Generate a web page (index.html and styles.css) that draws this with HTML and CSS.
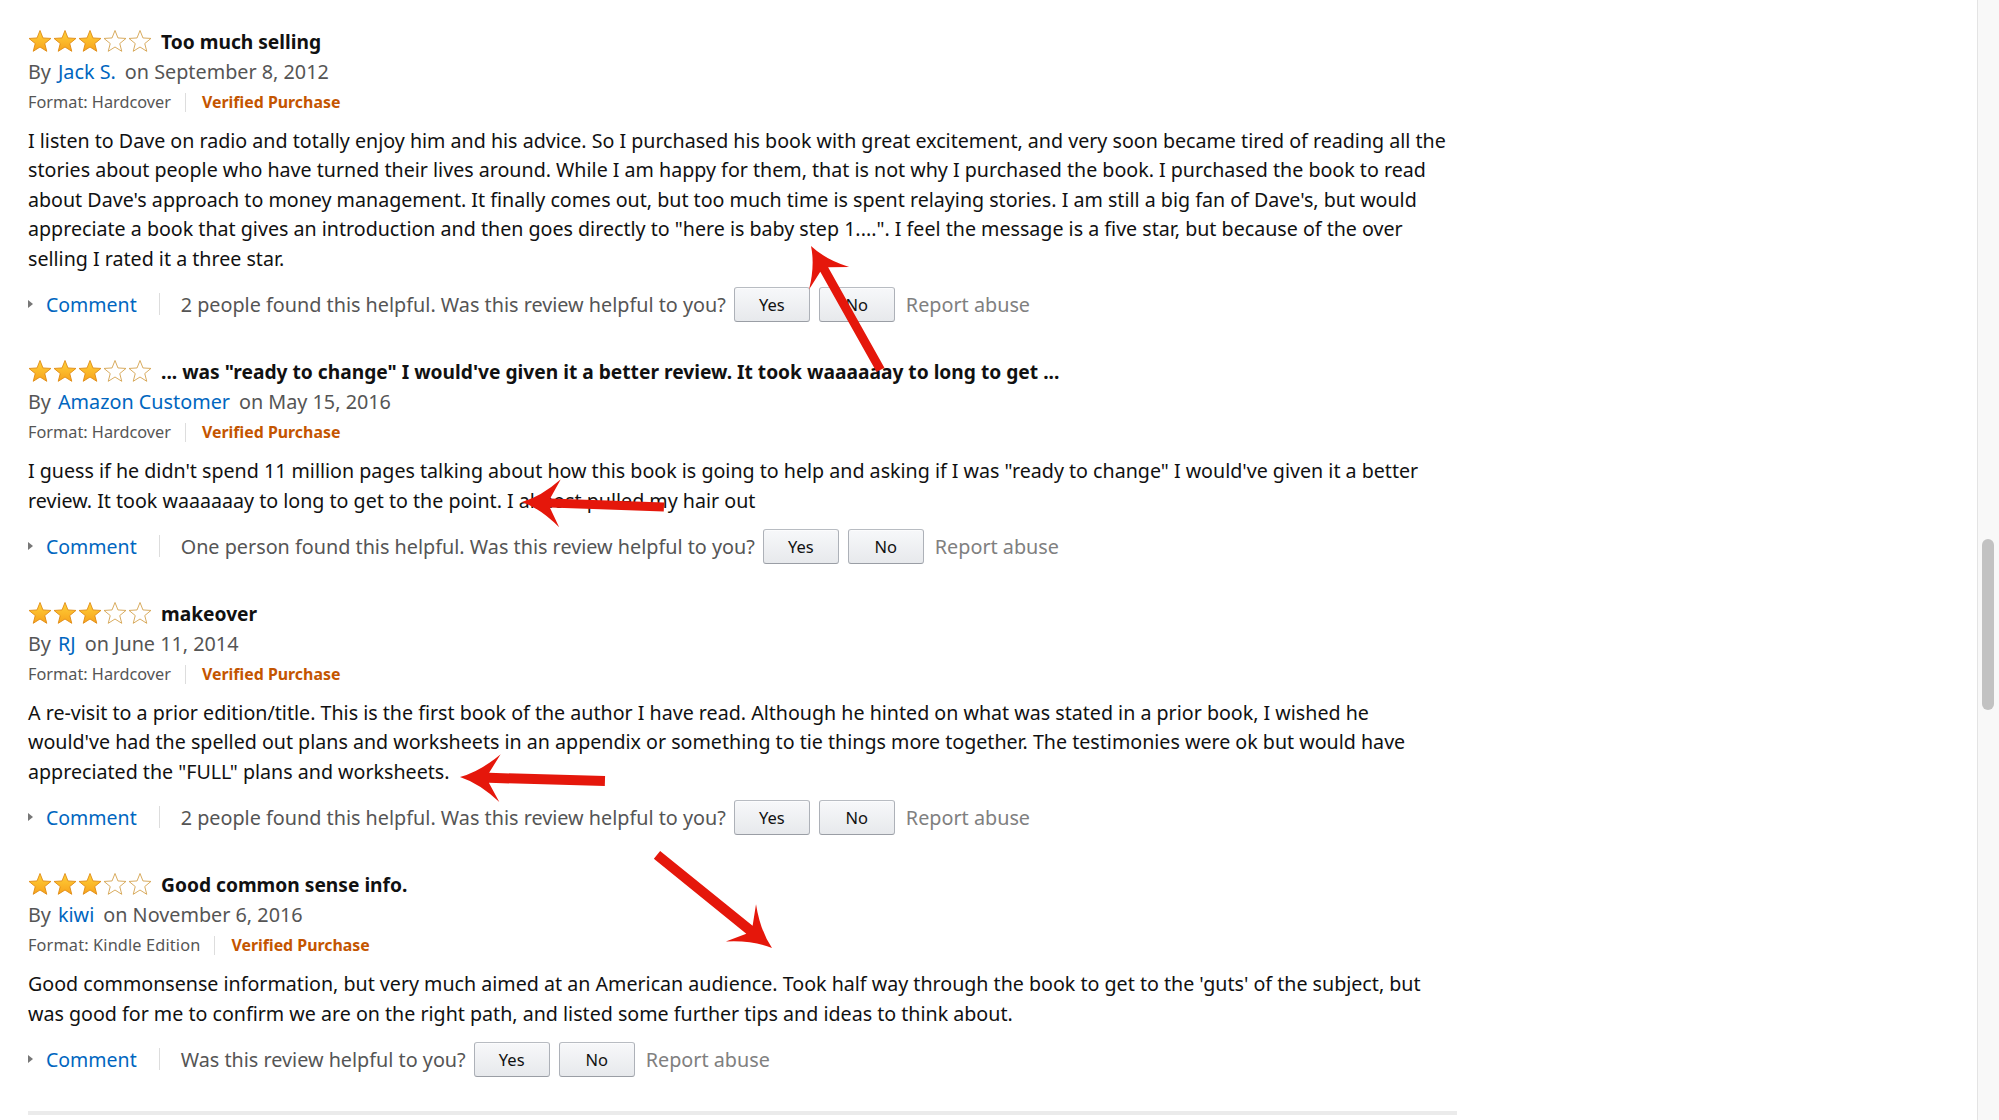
FILE: index.html
```html
<!DOCTYPE html>
<html lang="en">
<head>
<meta charset="utf-8">
<title>Customer reviews</title>
<link rel="stylesheet" href="styles.css">
</head>
<body>
<svg class="defs" width="0" height="0" aria-hidden="true">
  <defs>
    <linearGradient id="gold" x1="0" y1="0" x2="0" y2="1">
      <stop offset="0" stop-color="#ffd23a"/>
      <stop offset="1" stop-color="#f7a21b"/>
    </linearGradient>
    <path id="star" d="M0,-11.5 L2.94,-4.05 L10.94,-3.55 L4.76,1.55 L6.76,9.3 L0,5 L-6.76,9.3 L-4.76,1.55 L-10.94,-3.55 L-2.94,-4.05 Z"/>
  </defs>
</svg>

<div class="page">
  <main class="reviews">

    <section class="review">
      <div class="title-row">
        <svg class="stars" width="126" height="23" viewBox="0 0 126 23">
          <use href="#star" x="12" y="12" class="full"/>
          <use href="#star" x="37" y="12" class="full"/>
          <use href="#star" x="62" y="12" class="full"/>
          <use href="#star" x="87" y="12" class="empty"/>
          <use href="#star" x="112" y="12" class="empty"/>
        </svg>
        <span class="title">Too much selling</span>
      </div>
      <div class="byline"><span class="by">By</span><a class="author">Jack S.</a><span class="date">on September 8, 2012</span></div>
      <div class="meta"><span class="format">Format: Hardcover</span><span class="vsep"></span><span class="verified">Verified Purchase</span></div>
      <p class="text">I listen to Dave on radio and totally enjoy him and his advice. So I purchased his book with great excitement, and very soon became tired of reading all the<br>stories about people who have turned their lives around. While I am happy for them, that is not why I purchased the book. I purchased the book to read<br>about Dave's approach to money management. It finally comes out, but too much time is spent relaying stories. I am still a big fan of Dave's, but would<br>appreciate a book that gives an introduction and then goes directly to "here is baby step 1....". I feel the message is a five star, but because of the over<br>selling I rated it a three star.</p>
      <div class="actions">
        <span class="caret"></span><a class="comment">Comment</a><span class="asep"></span>
        <span class="helpful">2 people found this helpful. Was this review helpful to you?</span>
        <button class="btn">Yes</button><button class="btn">No</button>
        <span class="report">Report abuse</span>
      </div>
    </section>

    <section class="review">
      <div class="title-row">
        <svg class="stars" width="126" height="23" viewBox="0 0 126 23">
          <use href="#star" x="12" y="12" class="full"/>
          <use href="#star" x="37" y="12" class="full"/>
          <use href="#star" x="62" y="12" class="full"/>
          <use href="#star" x="87" y="12" class="empty"/>
          <use href="#star" x="112" y="12" class="empty"/>
        </svg>
        <span class="title">... was "ready to change" I would've given it a better review. It took waaaaaay to long to get ...</span>
      </div>
      <div class="byline"><span class="by">By</span><a class="author">Amazon Customer</a><span class="date">on May 15, 2016</span></div>
      <div class="meta"><span class="format">Format: Hardcover</span><span class="vsep"></span><span class="verified">Verified Purchase</span></div>
      <p class="text">I guess if he didn't spend 11 million pages talking about how this book is going to help and asking if I was "ready to change" I would've given it a better<br>review. It took waaaaaay to long to get to the point. I almost pulled my hair out</p>
      <div class="actions">
        <span class="caret"></span><a class="comment">Comment</a><span class="asep"></span>
        <span class="helpful">One person found this helpful. Was this review helpful to you?</span>
        <button class="btn">Yes</button><button class="btn">No</button>
        <span class="report">Report abuse</span>
      </div>
    </section>

    <section class="review">
      <div class="title-row">
        <svg class="stars" width="126" height="23" viewBox="0 0 126 23">
          <use href="#star" x="12" y="12" class="full"/>
          <use href="#star" x="37" y="12" class="full"/>
          <use href="#star" x="62" y="12" class="full"/>
          <use href="#star" x="87" y="12" class="empty"/>
          <use href="#star" x="112" y="12" class="empty"/>
        </svg>
        <span class="title">makeover</span>
      </div>
      <div class="byline"><span class="by">By</span><a class="author">RJ</a><span class="date">on June 11, 2014</span></div>
      <div class="meta"><span class="format">Format: Hardcover</span><span class="vsep"></span><span class="verified">Verified Purchase</span></div>
      <p class="text">A re-visit to a prior edition/title. This is the first book of the author I have read. Although he hinted on what was stated in a prior book, I wished he<br>would've had the spelled out plans and worksheets in an appendix or something to tie things more together. The testimonies were ok but would have<br>appreciated the "FULL" plans and worksheets.</p>
      <div class="actions">
        <span class="caret"></span><a class="comment">Comment</a><span class="asep"></span>
        <span class="helpful">2 people found this helpful. Was this review helpful to you?</span>
        <button class="btn">Yes</button><button class="btn">No</button>
        <span class="report">Report abuse</span>
      </div>
    </section>

    <section class="review">
      <div class="title-row">
        <svg class="stars" width="126" height="23" viewBox="0 0 126 23">
          <use href="#star" x="12" y="12" class="full"/>
          <use href="#star" x="37" y="12" class="full"/>
          <use href="#star" x="62" y="12" class="full"/>
          <use href="#star" x="87" y="12" class="empty"/>
          <use href="#star" x="112" y="12" class="empty"/>
        </svg>
        <span class="title">Good common sense info.</span>
      </div>
      <div class="byline"><span class="by">By</span><a class="author">kiwi</a><span class="date">on November 6, 2016</span></div>
      <div class="meta"><span class="format format-wide">Format: Kindle Edition</span><span class="vsep"></span><span class="verified">Verified Purchase</span></div>
      <p class="text">Good commonsense information, but very much aimed at an American audience. Took half way through the book to get to the 'guts' of the subject, but<br>was good for me to confirm we are on the right path, and listed some further tips and ideas to think about.</p>
      <div class="actions">
        <span class="caret"></span><a class="comment">Comment</a><span class="asep"></span>
        <span class="helpful">Was this review helpful to you?</span>
        <button class="btn">Yes</button><button class="btn">No</button>
        <span class="report">Report abuse</span>
      </div>
    </section>

    <div class="divider"></div>
  </main>

  <aside class="scrollbar"><div class="thumb"></div></aside>

  <svg class="annotations" width="1999" height="1120" viewBox="0 0 1999 1120" aria-hidden="true">
    <g fill="#e5170b">
      <path transform="translate(811 246) rotate(60.7)" d="M0,0 Q19,-6 37,-23 L27,-4.5 L142,-4.5 L142,4.5 L27,4.5 L37,23 Q19,6 0,0 Z"/>
      <path transform="translate(522 502) rotate(2)" d="M0,0 Q19,-6 38,-24 L28,-4.5 L142,-4.5 L142,4.5 L28,4.5 L38,24 Q19,6 0,0 Z"/>
      <path transform="translate(460 777) rotate(1.6)" d="M0,0 Q20,-6 40,-24 L29,-5 L145,-5 L145,5 L29,5 L40,24 Q20,6 0,0 Z"/>
      <path transform="translate(772 948) rotate(-141)" d="M0,0 Q20,-6 40,-24 L29,-5 L148,-5 L148,5 L29,5 L40,24 Q20,6 0,0 Z"/>
    </g>
  </svg>
</div>
</body>
</html>
```
FILE: styles.css
```css
html, body {
  margin: 0;
  padding: 0;
  height: 1120px;
  overflow: hidden;
  background: #ffffff;
}

.defs {
  position: absolute;
  width: 0;
  height: 0;
}

.page {
  position: relative;
  display: flex;
  height: 1120px;
  font-family: "Noto Sans", "Open Sans", sans-serif;
  color: #111111;
}

.reviews {
  flex: 1;
  padding: 26px 0 0 28px;
}

.review {
  margin-bottom: 34px;
}

.title-row {
  display: flex;
  align-items: center;
  height: 30px;
  gap: 7px;
}

.stars {
  display: block;
  flex: none;
}

.stars .full {
  fill: url(#gold);
  stroke: #e08a12;
  stroke-width: 0.9;
}

.stars .empty {
  fill: #ffffff;
  stroke: #d4a24d;
  stroke-width: 0.9;
}

.title {
  font-size: 19.2px;
  font-weight: 700;
  color: #111111;
  white-space: nowrap;
}

.byline {
  margin-top: 1px;
  height: 30px;
  line-height: 30px;
  font-size: 19.8px;
  color: #555555;
  white-space: nowrap;
}

.by {
  margin-right: 7px;
}

.author {
  color: #0066c0;
  margin-right: 9px;
}

.meta {
  display: flex;
  align-items: center;
  height: 30px;
  white-space: nowrap;
}

.format {
  font-size: 16.3px;
  color: #555555;
}

.format-wide {
  letter-spacing: 0.15px;
}

.vsep {
  width: 1px;
  height: 19px;
  background: #dddddd;
  margin: 0 16px 0 14px;
}

.verified {
  font-size: 15.9px;
  font-weight: 700;
  color: #c45500;
}

.text {
  margin: 8.5px 0 0 0;
  font-size: 19.65px;
  line-height: 29.6px;
  color: #111111;
  white-space: nowrap;
}

.actions {
  display: flex;
  align-items: center;
  height: 36px;
  margin-top: 13px;
  font-size: 19.8px;
  white-space: nowrap;
}

.caret {
  width: 0;
  height: 0;
  border-left: 5px solid #777777;
  border-top: 4px solid transparent;
  border-bottom: 4px solid transparent;
  margin-right: 13px;
}

.comment {
  color: #0066c0;
  font-size: 19.5px;
}

.asep {
  width: 1px;
  height: 22px;
  background: #dddddd;
  margin: 0 21px 0 22px;
}

.helpful {
  color: #555555;
  margin-right: 8px;
}

.btn {
  box-sizing: border-box;
  width: 76px;
  height: 35px;
  margin: 0 9px 0 0;
  padding: 0;
  border: 1px solid #adb1b8;
  border-top-color: #b8bcc2;
  border-bottom-color: #9a9ea5;
  border-radius: 3px;
  background: linear-gradient(#f7f8fa, #e7e9ec);
  box-shadow: inset 0 1px 0 rgba(255, 255, 255, 0.6);
  font-family: "Noto Sans", "Open Sans", sans-serif;
  font-size: 16.5px;
  color: #111111;
}

.report {
  margin-left: 2px;
  color: #808080;
}

.divider {
  width: 1429px;
  margin-top: 28px;
  border-top: 4px solid #ebebeb;
}

.scrollbar {
  flex: none;
  width: 21px;
  background: #f8f8f8;
  border-left: 1px solid #e4e4e4;
}

.thumb {
  width: 12px;
  height: 171px;
  margin: 539px 0 0 4px;
  border-radius: 6px;
  background: #c2c2c2;
}

.annotations {
  position: absolute;
  left: 0;
  top: 0;
  pointer-events: none;
}
```
